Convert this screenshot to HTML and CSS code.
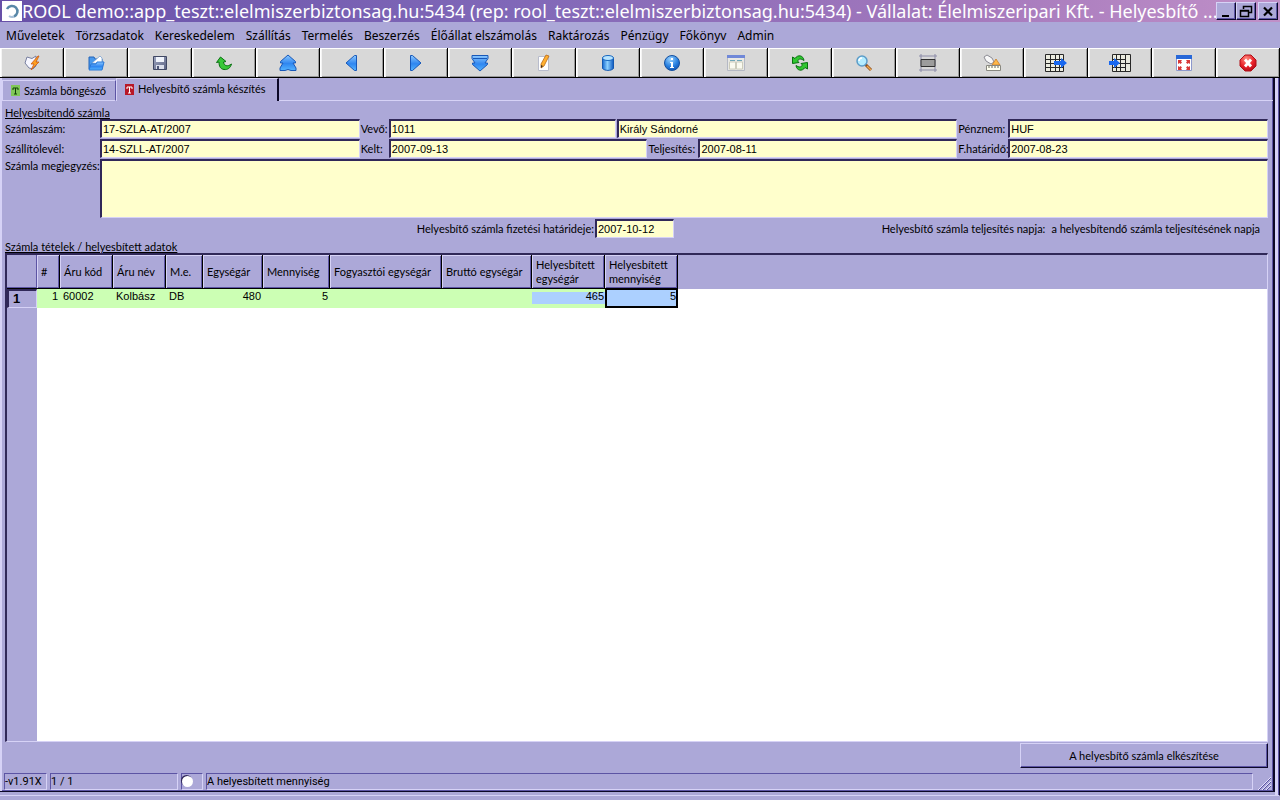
FILE: index.html
```html
<!DOCTYPE html>
<html lang="hu">
<head>
<meta charset="utf-8">
<title>ROOL demo</title>
<link rel="stylesheet" href="styles.css">
</head>
<body>
<header class="titlebar">
  <svg class="app-icon" viewBox="0 0 20 20"><rect width="20" height="20" fill="#fff"/><path d="M5 8a5.500 5.500 0 1 1 7 7.500" fill="none" stroke="#5888a8" stroke-width="2.500"/><path d="M12 15.500a5 5 0 0 1-5-.5" fill="none" stroke="#a8c0d8" stroke-width="2"/></svg>
  <h1 class="title">ROOL demo::app_teszt::elelmiszerbiztonsag.hu:5434 (rep: rool_teszt::elelmiszerbiztonsag.hu:5434) - Vállalat: Élelmiszeripari Kft. - Helyesbítő ...</h1>
  <div class="win-controls">
    <button class="win-btn" aria-label="Kis méret"><svg viewBox="0 0 16 16"><path d="M4 12h7v2H4z"/></svg></button>
    <button class="win-btn" aria-label="Előző méret"><svg viewBox="0 0 16 16"><path d="M5.500 6V3.500h8v6H11M5 3.500h9M2.500 7.500h8v6h-8zM2 8h9" fill="none" stroke="#000" stroke-width="1.500"/></svg></button>
    <button class="win-btn win-close" aria-label="Bezárás"><svg viewBox="0 0 16 16"><path d="M4 4.500l8 8M12 4.500l-8 8" stroke="#000" stroke-width="2.200"/></svg></button>
  </div>
</header>

<nav class="menubar">
  <a href="#">Műveletek</a><a href="#">Törzsadatok</a><a href="#">Kereskedelem</a><a href="#">Szállítás</a><a href="#">Termelés</a><a href="#">Beszerzés</a><a href="#">Élőállat elszámolás</a><a href="#">Raktározás</a><a href="#">Pénzügy</a><a href="#">Főkönyv</a><a href="#">Admin</a>
</nav>

<svg class="defs" aria-hidden="true">
  <defs>
    <linearGradient id="blue" x1="0" y1="0" x2="0" y2="1"><stop offset="0" stop-color="#8cc8ff"/><stop offset=".55" stop-color="#2f86f0"/><stop offset="1" stop-color="#54b4ff"/></linearGradient>
    <linearGradient id="cyl" x1="0" y1="0" x2="1" y2="0"><stop offset="0" stop-color="#1468d0"/><stop offset=".45" stop-color="#8cd0ff"/><stop offset="1" stop-color="#0c58c0"/></linearGradient>
    <linearGradient id="steel" x1="0" y1="0" x2="1" y2="1"><stop offset="0" stop-color="#9ea6c0"/><stop offset="1" stop-color="#5c6484"/></linearGradient>
    <radialGradient id="ball" cx=".4" cy=".25" r=".8"><stop offset="0" stop-color="#9cd4ff"/><stop offset=".6" stop-color="#2880e0"/><stop offset="1" stop-color="#1050b0"/></radialGradient>
    <radialGradient id="red" cx=".4" cy=".25" r=".8"><stop offset="0" stop-color="#ff8c80"/><stop offset=".6" stop-color="#e82028"/><stop offset="1" stop-color="#b00818"/></radialGradient>
  </defs>
</svg>

<div class="toolbar">
  <button class="tool" aria-label="Végrehajtás"><svg viewBox="0 0 18 18"><path d="M4 3l5 1.500L13 2v10l-3 3-4-1-4-5z" fill="#f6f6ff" stroke="#7880a0"/><path d="M15 2L8 10h3l-3 6 8-8h-3l3-6z" fill="#ffa020" stroke="#c85818" stroke-width=".8"/></svg></button>
  <button class="tool" aria-label="Megnyitás"><svg viewBox="0 0 18 18"><path d="M2 15V3h5l1 2h7v10z" fill="#4898ec" stroke="#2464b8"/><path d="M5 9l8-7 2 2v6z" fill="#fff" stroke="#6898d0" stroke-width=".7"/><path d="M2 16l2-6h5l1-2h7l-2 8z" fill="url(#blue)" stroke="#2878d8"/></svg></button>
  <button class="tool" aria-label="Mentés"><svg viewBox="0 0 18 18"><path d="M2.500 2.500h13v13h-13z" fill="url(#steel)" stroke="#404864"/><path d="M5 3h8v5H5z" fill="#f0f4fc"/><path d="M5 11h8v4H5z" fill="#dce0ec"/><path d="M6 12h2v3H6z" fill="#505878"/></svg></button>
  <button class="tool" aria-label="Visszavonás"><svg viewBox="0 0 18 18"><path d="M1.500 8.500L5.500 3l5.500 4.500-2.500.5c.5 4 4 5 8 2-1 4-4 6-7.500 5.500-3.500-.5-5-3-5-7.500z" fill="#38c838" stroke="#087010"/></svg></button>
  <button class="tool" aria-label="Első"><svg viewBox="0 0 18 18"><path d="M9 1l7.500 6.500V9H14l3 5v2.500h-5L9 15.500l-3 1H1V14l3-5H1.500V7.500z" fill="url(#blue)" stroke="#1858b8"/></svg></button>
  <button class="tool" aria-label="Előző"><svg viewBox="0 0 18 18"><path d="M13.500 1.500v15h-2L3 9l8.500-7.500z" fill="url(#blue)" stroke="#1858b8"/></svg></button>
  <button class="tool" aria-label="Következő"><svg viewBox="0 0 18 18"><path d="M3.500 1.500v15h2L14 9 5.500 1.500z" fill="url(#blue)" stroke="#1858b8"/></svg></button>
  <button class="tool" aria-label="Utolsó"><svg viewBox="0 0 18 18"><path d="M9 17l7.500-6.500V9H14l3-4.500V1.500H1v3L4 9H1.500v1.500z" fill="url(#blue)" stroke="#1858b8"/><path d="M2 4.500h14" stroke="#1858b8"/></svg></button>
  <button class="tool" aria-label="Szerkesztés"><svg viewBox="0 0 18 18"><path d="M3.500 2.500h10v14h-10z" fill="#fff" stroke="#b8bccc"/><path d="M11 1l3 1-5 10-3 2V10z" fill="#ffb030" stroke="#b86818" stroke-width=".8"/><path d="M6 14v-3l2 1z" fill="#403020"/></svg></button>
  <button class="tool" aria-label="Adatbázis"><svg viewBox="0 0 18 18"><path d="M3.500 4v10.500c2 2.500 9 2.500 11 0V4z" fill="url(#cyl)" stroke="#1458b0"/><ellipse cx="9" cy="4" rx="5.500" ry="2.500" fill="#b8e4ff" stroke="#1868c0"/></svg></button>
  <button class="tool" aria-label="Információ"><svg viewBox="0 0 18 18"><circle cx="9" cy="9" r="7.500" fill="url(#ball)" stroke="#1450a0"/><path d="M8 4h2v2H8zM7 8h3v5h1v1H7v-1h1V9H7z" fill="#fff"/></svg></button>
  <button class="tool" aria-label="Ablakok"><svg viewBox="0 0 18 18"><path d="M.5 1.500h17v15H.5z" fill="#e8e8e4" stroke="#b4b8c4"/><path d="M0 1h18v3H0z" fill="#7088d8"/><path d="M3 6.500h5M10 6.500h5" stroke="#70a8b8"/><path d="M2.500 8v7h6V8zM9.500 8v7h6V8z" fill="#fafaf0" stroke="#ccccbc"/></svg></button>
  <button class="tool" aria-label="Frissítés"><svg viewBox="0 0 18 18"><path d="M1.500 9.500L8 8.500 6.500 7C8 4.500 10 4.500 13 6.500 12.500 1.500 7 0 4 4.500L1.500 3z" fill="#30c830" stroke="#087010"/><path d="M16.500 8.500L10 9.500l1.500 1.500C10 13.500 8 13.500 5 11.500c.5 5 6 6.500 9 2l2.500 1.500z" fill="#30c830" stroke="#087010"/></svg></button>
  <button class="tool" aria-label="Keresés"><svg viewBox="0 0 18 18"><path d="M10 10l6 6" stroke="#905020" stroke-width="3"/><path d="M12 12l4 4" stroke="#f0a848" stroke-width="1.500"/><circle cx="7" cy="7" r="5" fill="#b4ecff" stroke="#5c9cc8" stroke-width="1.500"/><path d="M4 7c0-2 1-3 3-3" fill="none" stroke="#fff" stroke-width="1.500"/></svg></button>
  <button class="tool" aria-label="Kivágás"><svg viewBox="0 0 18 18"><path d="M2 0v18M16 0v18M0 2h18M0 16h18" stroke="#8c8ca8"/><path d="M2 5.500h14v7H2z" fill="#9c9c9c" stroke="#303030"/></svg></button>
  <button class="tool" aria-label="Beállítások"><svg viewBox="0 0 18 18"><path d="M1 3l3-2 5 3 2 4-3 2-5-3z" fill="#f8f8f8" stroke="#8c8c94"/><path d="M13 5l4 6H9z" fill="#ffb848" stroke="#c87c28" stroke-width=".8"/><path d="M3.500 11.500h14v5h-14z" fill="#fffff0" stroke="#888880"/><path d="M6 12v2M9 12v2M12 12v2M15 12v2" stroke="#66665c"/></svg></button>
  <button class="tool tool-wide" aria-label="Exportálás"><svg viewBox="0 0 24 18"><path d="M1.500.5v17h18V.5zM6.500 1v16M11.500 1v16M15.500 1v16M1 5.500h18M1 9.500h18M1 13.500h18" fill="#ecece0" stroke="#282828"/><path d="M10 7h7V4l6 5-6 5v-3h-7z" fill="#1868f0"/></svg></button>
  <button class="tool tool-wide" aria-label="Importálás"><svg viewBox="0 0 24 18"><path d="M4.500.5v17h18V.5zM8.500 1v16M12.500 1v16M17.500 1v16M4 5.500h13M4 9.500h18M4 13.500h13" fill="#ecece0" stroke="#282828"/><path d="M1 7h5V4l6 5-6 5v-3H1z" fill="#1868f0"/></svg></button>
  <button class="tool" aria-label="Teljes képernyő"><svg viewBox="0 0 18 18"><path d="M1.500 2.500h15v14h-15z" fill="#fff" stroke="#8c98cc"/><path d="M1 1h16v4H1z" fill="#2868d8"/><path d="M3 6h4L6 7.500l1 1L5.500 10l-1-1L3 10zM15 6h-4l1 1.500-1 1 1.500 1.500 1-1L15 10zM3 16v-4l1.500 1 1-1L7 13.500l-1 1L7 16zM15 16v-4l-1.500 1-1-1-1.500 1.500 1 1-1 1.500z" fill="#d83838"/></svg></button>
  <button class="tool" aria-label="Kilépés"><svg viewBox="0 0 18 18"><path d="M6 1h6l5 5v6l-5 5H6l-5-5V6z" fill="url(#red)" stroke="#b01018"/><path d="M6 5.500l6 7M12 5.500l-6 7" stroke="#fff" stroke-width="2.800"/></svg></button>
</div>

<div class="frame">
<main class="window">
  <div class="tabs" role="tablist">
    <button class="tab" role="tab"><svg class="tab-icon" viewBox="0 0 9 11"><rect width="9" height="11" fill="#80c858"/><path d="M2 3h5v2M2 3v2M4.500 3v6M3 9h3" fill="none" stroke="#104008"/></svg>Számla böngésző</button>
    <button class="tab tab-active" role="tab" aria-selected="true"><svg class="tab-icon" viewBox="0 0 9 11"><rect width="9" height="11" fill="#b81828"/><path d="M2 3h5v2M2 3v2M4.500 3v6M3 9h3" fill="none" stroke="#fff"/></svg>Helyesbítő számla készítés</button>
    <div class="tab-rest"></div>
  </div>

  <section class="page">
    <h2 class="heading">Helyesbítendő számla</h2>
    <form class="form">
      <div class="row">
        <label for="szam">Számlaszám:</label><input id="szam" value="17-SZLA-AT/2007" readonly>
        <label for="vevo">Vevő:</label>
        <div class="customer"><input id="vevo" value="1011" readonly><input aria-label="Vevő neve" value="Király Sándorné" readonly></div>
        <label for="penz">Pénznem:</label><input id="penz" value="HUF" readonly>
      </div>
      <div class="row">
        <label for="szall">Szállítólevél:</label><input id="szall" value="14-SZLL-AT/2007" readonly>
        <label for="kelt">Kelt:</label>
        <div class="dates"><input id="kelt" value="2007-09-13" readonly><label for="telj">Teljesítés:</label><input id="telj" value="2007-08-11" readonly></div>
        <label for="hat">F.határidő:</label><input id="hat" value="2007-08-23" readonly>
      </div>
      <div class="memo"><label for="megj">Számla megjegyzés:</label><textarea id="megj" readonly></textarea></div>
      <div class="due">
        <div class="due-date"><label for="fiz">Helyesbítő számla fizetési határideje:</label><input id="fiz" value="2007-10-12"></div>
        <p class="due-note"><span>Helyesbítő számla teljesítés napja:</span><span>a helyesbítendő számla teljesítésének napja</span></p>
      </div>
    </form>

    <h2 class="heading">Számla tételek / helyesbített adatok</h2>
    <div class="grid">
      <table class="items">
        <colgroup><col class="w-head"><col class="w-no"><col class="w-code"><col class="w-code"><col class="w-unit"><col class="w-price"><col class="w-qty"><col class="w-cons"><col class="w-gross"><col class="w-fix"><col class="w-fix"><col></colgroup>
        <thead><tr><th class="corner"></th><th>#</th><th>Áru kód</th><th>Áru név</th><th>M.e.</th><th>Egységár</th><th>Mennyiség</th><th>Fogyasztói egységár</th><th>Bruttó egységár</th><th>Helyesbített<br>egységár</th><th>Helyesbített<br>mennyiség</th><td class="head-rest"></td></tr></thead>
        <tbody><tr><th class="row-no" scope="row">1</th><td class="num">1</td><td>60002</td><td>Kolbász</td><td>DB</td><td class="num">480</td><td class="num">5</td><td></td><td></td><td class="num edit">465</td><td class="num current">5</td><td class="row-rest"></td></tr></tbody>
      </table>
      <div class="gutter"></div>
    </div>
    <div class="actions"><button class="make">A helyesbítő számla elkészítése</button></div>
  </section>

  <footer class="status">
    <div class="panel panel-version">-v1.91X</div>
    <div class="panel panel-pos">1 / 1</div>
    <div class="panel panel-led"><input class="led" type="radio" aria-label="Állapot"></div>
    <div class="panel panel-hint">A helyesbített mennyiség</div>
    <svg class="grip" viewBox="0 0 13 13"><path d="M0 13L13 0M4 13l9-9M8 13l5-5" stroke="#e8e4ff"/><path d="M1 13L13 1M5 13l8-8M9 13l4-4" stroke="#5850a0"/></svg>
  </footer>
</main>
</div>
</body>
</html>
```
FILE: styles.css
```css
:root {
  --face: #aca8d8;
  --light: #d6d2f6;
  --shade: #5c54a4;
  --dark: #0c0828;
  --field: #ffffcc;
}
* { box-sizing: border-box; }
body {
  margin: 0;
  height: 100vh;
  display: flex;
  flex-direction: column;
  background: var(--face);
  color: #000;
  font: 11px/14px Lato, Arial, sans-serif;
}
button, input, textarea { font: inherit; color: inherit; border-radius: 0; }
h1, h2, p { margin: 0; font: inherit; }
svg { display: block; }
.defs { position: absolute; width: 0; height: 0; }

.titlebar {
  display: flex;
  align-items: center;
  height: 22px;
  padding: 0 2px;
  background: linear-gradient(90deg, #6850a8, #8068b8 40%, #a478bc 75%, #c090c8);
}
.app-icon { width: 20px; height: 20px; flex: none; }
.title {
  flex: 1;
  min-width: 0;
  overflow: hidden;
  white-space: nowrap;
  color: #fff;
  font: 18px/22px "Noto Sans", Verdana, sans-serif;
}
.win-controls { display: flex; }
.win-btn {
  width: 20px;
  height: 18px;
  padding: 0 1px;
  background: var(--face);
  border: 1px solid;
  border-color: var(--light) var(--dark) var(--dark) var(--light);
  box-shadow: inset -1px -1px var(--shade);
}
.win-btn svg { width: 16px; height: 16px; }
.win-close { margin-left: 2px; }

.menubar {
  display: flex;
  gap: 11px;
  height: 26px;
  padding: 0 6px;
  font: 12px/27px "Noto Sans", Tahoma, sans-serif;
}
.menubar a { color: #000; text-decoration: none; white-space: nowrap; }

.toolbar { display: grid; grid-template-columns: repeat(20, 1fr); height: 30px; }
.tool {
  display: flex;
  align-items: center;
  justify-content: center;
  min-width: 0;
  padding: 0;
  background: #d8d8d8;
  border: solid #000;
  border-width: 0 1px 1px 0;
  box-shadow: inset 1px 1px #fff, inset 2px 0 #f4f4f4, inset -1px -1px #989898;
}
.tool svg { width: 18px; height: 18px; }
.tool-wide svg { width: 24px; }

.frame {
  flex: 1;
  min-height: 0;
  display: flex;
  padding: 0 4px 3px 0;
  margin-bottom: 4px;
  border-right: 1px solid var(--dark);
  border-bottom: 1px solid var(--light);
  box-shadow: inset -1px 0 var(--shade), inset -4px 0 var(--light);
}
.window {
  flex: 1;
  min-width: 0;
  display: flex;
  flex-direction: column;
  background: var(--face);
  border: solid var(--dark);
  border-width: 0 2px 1px 0;
  box-shadow: inset 2px 0 var(--light), inset -1px -1px var(--shade);
}
.tabs { display: flex; align-items: flex-end; height: 23px; padding-left: 2px; }
.tab {
  display: flex;
  align-items: center;
  gap: 4px;
  height: 21px;
  padding: 0 9px 0 8px;
  background: var(--face);
  border: solid;
  border-width: 1px;
  border-color: var(--light) var(--shade) var(--light) var(--light);
  white-space: nowrap;
}
.tab-icon { width: 9px; height: 11px; }
.tab-active {
  height: 23px;
  padding: 0 11px 2px 8px;
  border-width: 1px 2px 0 1px;
  border-right-color: var(--dark);
}
.tab-rest { flex: 1; height: 1px; background: var(--light); }

.page { flex: 1; min-height: 0; display: flex; flex-direction: column; padding: 4px 5px 0 5px; }
.heading { height: 14px; line-height: 16px; text-decoration: underline; text-underline-offset: 1px; }
.form { margin: 0; }
.form label { padding: 3px 1px 0 0; white-space: nowrap; }
.row {
  display: grid;
  grid-template-columns: 95px 260fr 29px 569fr 51px 260fr;
  height: 20px;
}
.row > label:not(:first-child), .dates label { padding-left: 1px; }
.customer { display: grid; grid-template-columns: 2fr 3fr; gap: 1px; }
.dates { display: grid; grid-template-columns: 1fr 51px 1fr; }
input:not([type]), textarea {
  width: 100%;
  min-width: 0;
  height: 19px;
  padding: 0 1px 0 1px;
  background: var(--field);
  border: solid;
  border-width: 2px 1px 1px 2px;
  border-color: #302858 var(--light) var(--light) #302858;
  outline: 0;
  font-family: "Liberation Sans", Arial, sans-serif;
}
.memo { display: grid; grid-template-columns: 95px 1fr; height: 60px; }
.form .memo label { padding-top: 0; }
.memo textarea { height: 59px; resize: none; }
.due { display: grid; grid-template-columns: 669px 1fr; height: 20px; }
.due-date { display: flex; justify-content: flex-end; }
.due-date input:not([type]) { width: 79px; }
.due-note {
  display: flex;
  justify-content: flex-end;
  gap: 6px;
  padding: 3px 8px 0 0;
  white-space: nowrap;
}

.grid {
  flex: 1;
  min-height: 0;
  display: flex;
  flex-direction: column;
  background: #fff;
  border: solid;
  border-width: 2px 1px 1px 2px;
  border-color: #302858 var(--light) var(--light) #302858;
}
.items { width: 100%; table-layout: fixed; border-collapse: separate; border-spacing: 0; }
.w-head { width: 30px; }
.w-no { width: 23px; }
.w-code { width: 53px; }
.w-unit { width: 37px; }
.w-price { width: 60px; }
.w-qty { width: 67px; }
.w-cons { width: 112px; }
.w-gross { width: 90px; }
.w-fix { width: 73px; }
.items thead th {
  height: 34px;
  padding: 0 0 0 4px;
  background: var(--face);
  border: solid #000;
  border-width: 0 1px 1px 0;
  box-shadow: inset 1px 1px var(--light), inset -1px -1px var(--shade);
  font-weight: normal;
  text-align: left;
  white-space: nowrap;
}
.items thead .corner { border-right: 0; box-shadow: inset -1px -1px var(--shade); }
.items .head-rest { background: var(--face); padding: 0; }
.items td {
  height: 19px;
  padding: 0 3px;
  background: #ccffb4;
  vertical-align: top;
  white-space: nowrap;
  font-family: "Liberation Sans", Arial, sans-serif;
}
.items .row-no {
  padding: 0 4px;
  background: var(--face);
  border: solid;
  border-width: 2px 1px 1px 2px;
  border-color: #302858 var(--light) var(--light) #302858;
  font: bold 13px/16px "Liberation Sans", Arial, sans-serif;
  text-align: left;
}
.items .num { text-align: right; padding-right: 2px; }
.items .edit { padding-right: 1px; background: linear-gradient(#acd0ff, #acd0ff) 0 3px / 100% 12px no-repeat #ccffb4; }
.items .current { padding: 0; background: #acd0ff; border: 2px solid #000; border-top-width: 1px; line-height: 13px; }
.items .row-rest, .items .head-rest { padding: 0; }
.items .row-rest { background: #fff; }
.gutter { flex: 1; width: 30px; background: var(--face); }

.actions { display: flex; justify-content: flex-end; padding-top: 1px; }
.make {
  width: 248px;
  height: 25px;
  background: var(--face);
  border: solid;
  border-width: 1px;
  border-color: var(--light) var(--dark) var(--dark) var(--light);
  box-shadow: inset -1px -1px var(--shade);
}

.status {
  display: flex;
  align-items: flex-end;
  gap: 3px;
  padding: 5px 2px 1px 4px;
  font: 11px/16px Roboto, Tahoma, sans-serif;
}
.panel {
  height: 17px;
  padding-left: 0;
  border: 1px solid;
  border-color: var(--shade) var(--light) var(--light) var(--shade);
  white-space: nowrap;
}
.panel-version { width: 43px; }
.panel-pos { width: 128px; }
.panel-led { width: 22px; }
.panel-hint { flex: 1; margin-right: 2px; }
.led {
  appearance: none;
  display: block;
  width: 11px;
  height: 11px;
  margin: 2px 0;
  border-radius: 50%;
  background: #fff;
  box-shadow: -1px -1px #302858;
}
.grip { width: 13px; height: 13px; }
```
